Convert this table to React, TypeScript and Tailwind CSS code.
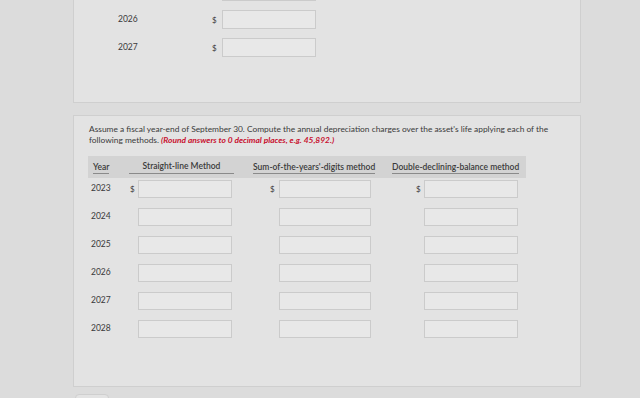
export default function App() {
  const topRows = ["", "2026", "2027"];
  const years = ["2023", "2024", "2025", "2026", "2027", "2028"];

  return (
    <div className="w-[640px] h-[398px] overflow-hidden bg-[#dcdcdc] font-['Lato','Liberation_Sans',sans-serif] text-[#3a3a3a]">
      <div className="ml-[73px] w-[508px]">
        {/* Previous part */}
        <div className="-mt-[30px] border border-[#cfcfcf] bg-[#e3e3e3] pt-[11px] pb-[45px] pl-[44px]">
          <div className="flex flex-col gap-[9px]">
            {topRows.map((y, i) => (
              <div key={i} className="flex h-[19px] items-center text-[8.5px]">
                <span className="w-[94px]">{y}</span>
                <span className="w-[10px] text-[8px]">{y ? "$" : ""}</span>
                <div className="h-[19px] w-[94px] border border-[#cbcbcb] bg-[#e8e8e8]" />
              </div>
            ))}
          </div>
        </div>

        {/* Depreciation table */}
        <div className="mt-[12px] h-[272px] border border-[#cfcfcf] bg-[#e3e3e3] pt-[8px] pl-[14px]">
          <p className="w-[472px] pl-[1px] text-[8.4px] leading-[11px]">
            Assume a fiscal year-end of September 30. Compute the annual depreciation charges over the
            asset's life applying each of the following methods.{" "}
            <span className="font-bold italic text-[#c8102e]">
              (Round answers to 0 decimal places, e.g. 45,892.)
            </span>
          </p>

          <div className="mt-[10px] flex h-[22px] w-[438px] items-center bg-[#d3d3d3] text-[8.5px] font-semibold">
            <div className="w-[40px] pl-[5px]">
              <span className="border-b border-[#8a8a8a] pb-[1px]">Year</span>
            </div>
            <div className="w-[108px] pl-[1px]">
              <div className="w-[105px] border-b border-[#8a8a8a] pb-[1px] text-center">
                Straight-line Method
              </div>
            </div>
            <div className="w-[140px] pl-[17px]">
              <span className="border-b border-[#8a8a8a] pb-[1px]">Sum-of-the-years'-digits method</span>
            </div>
            <div className="w-[150px] pl-[16px]">
              <span className="border-b border-[#8a8a8a] pb-[1px]">Double-declining-balance method</span>
            </div>
          </div>

          <div className="mt-[1px] flex flex-col gap-[9px]">
            {years.map((y, i) => (
              <div key={y} className="flex h-[19px] items-center text-[8.5px]">
                <span className="w-[40px] pl-[3px]">{y}</span>
                <div className="flex w-[108px] items-center">
                  <span className="ml-[2px] w-[8px] text-[8px]">{i === 0 ? "$" : ""}</span>
                  <div className="h-[18px] w-[94px] border border-[#cbcbcb] bg-[#e8e8e8]" />
                </div>
                <div className="flex w-[140px] items-center">
                  <span className="ml-[34px] w-[9px] text-[8px]">{i === 0 ? "$" : ""}</span>
                  <div className="h-[18px] w-[92px] border border-[#cbcbcb] bg-[#e8e8e8]" />
                </div>
                <div className="flex w-[150px] items-center">
                  <span className="ml-[40px] w-[8px] text-[8px]">{i === 0 ? "$" : ""}</span>
                  <div className="h-[18px] w-[94px] border border-[#cbcbcb] bg-[#e8e8e8]" />
                </div>
              </div>
            ))}
          </div>
        </div>

        <div className="mt-[7px] ml-[2px] h-[12px] w-[34px] rounded-sm border border-[#cfcfcf] bg-[#e3e3e3]" />
      </div>
    </div>
  );
}
